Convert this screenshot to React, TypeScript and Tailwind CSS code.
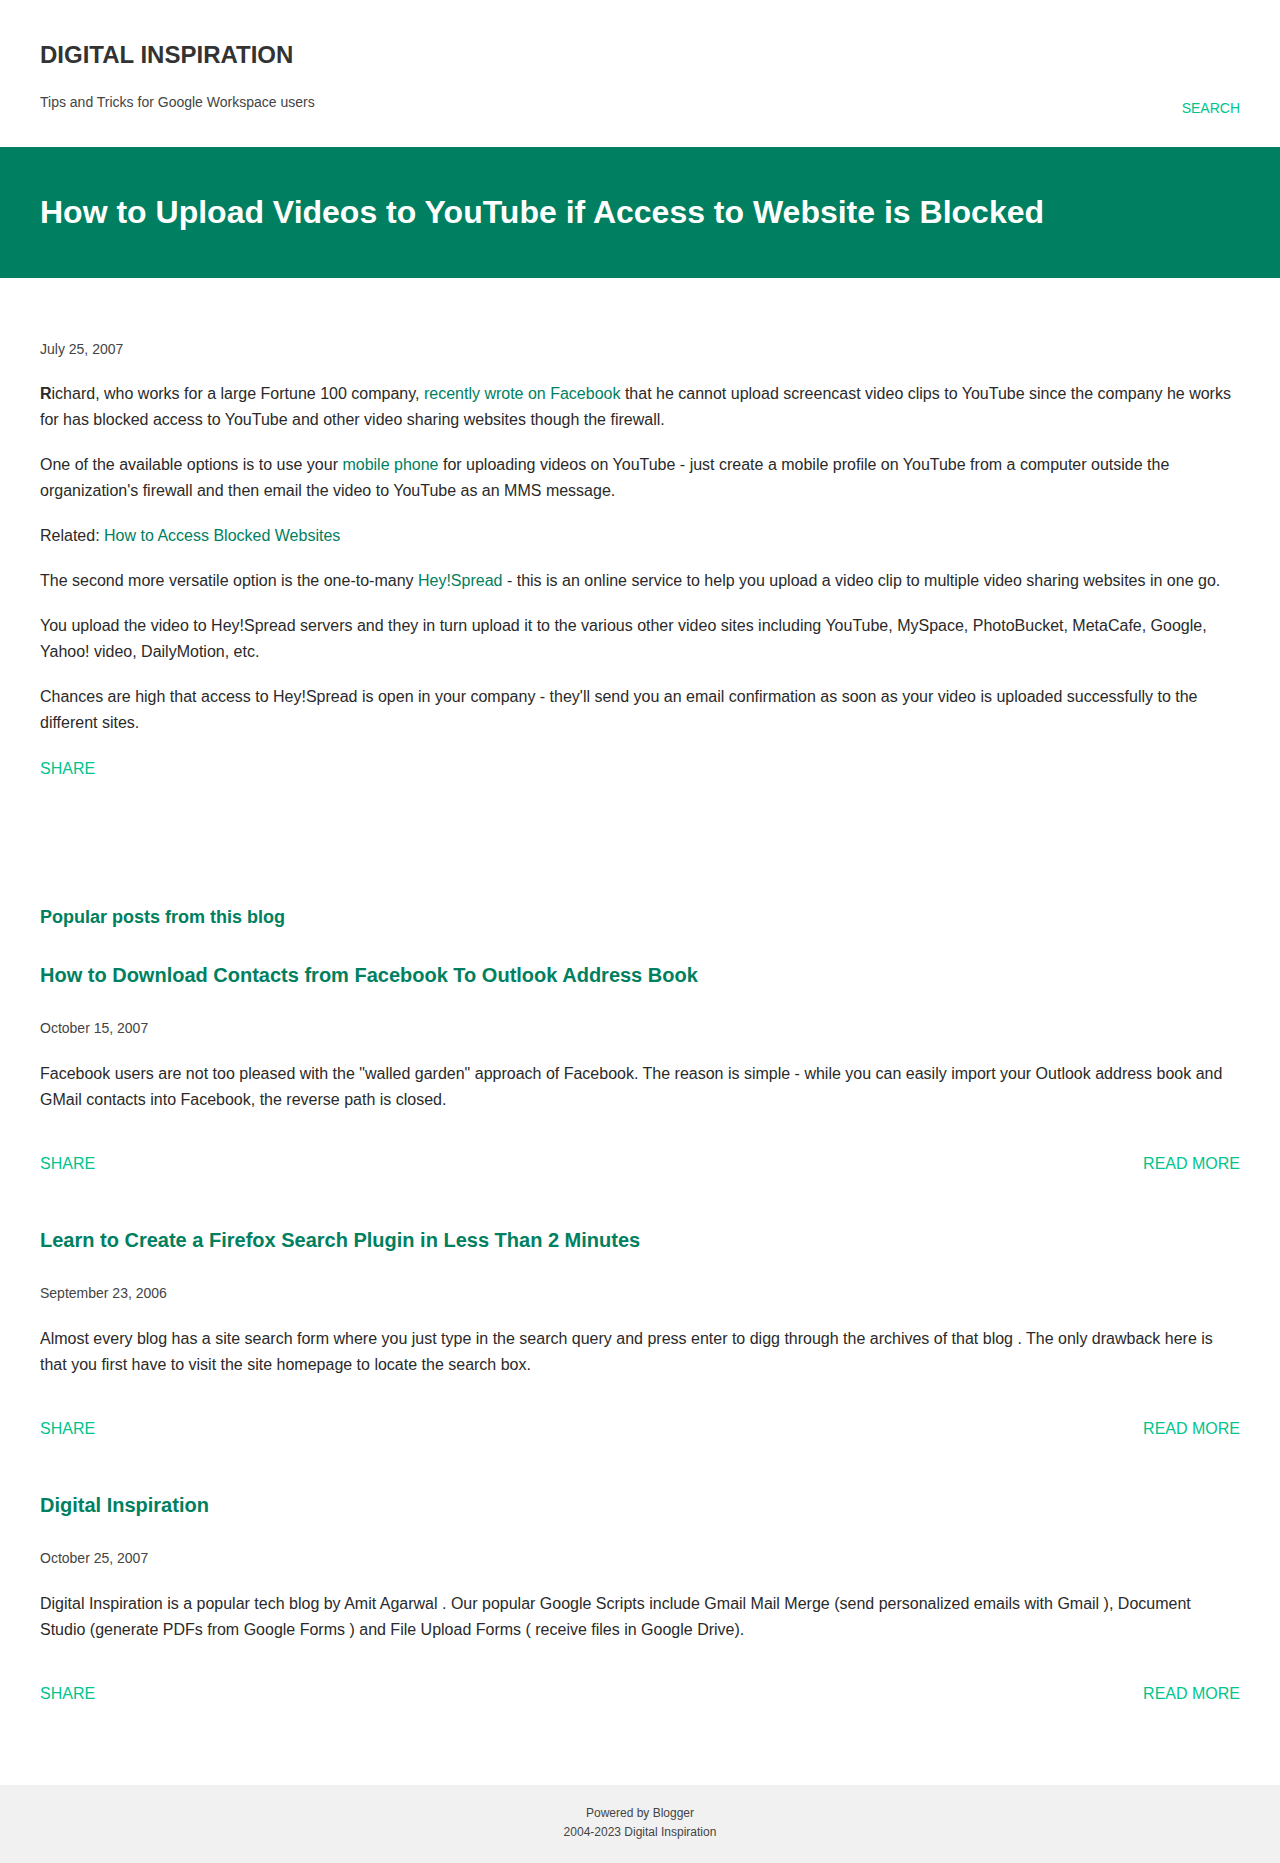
const posts = [
  {
    title: 'How to Download Contacts from Facebook To Outlook Address Book',
    date: 'October 15, 2007',
    snippet:
      'Facebook users are not too pleased with the "walled garden" approach of Facebook. The reason is simple - while you can easily import your Outlook address book and GMail contacts into Facebook, the reverse path is closed.',
  },
  {
    title: 'Learn to Create a Firefox Search Plugin in Less Than 2 Minutes',
    date: 'September 23, 2006',
    snippet:
      'Almost every blog has a site search form where you just type in the search query and press enter to digg through the archives of that blog . The only drawback here is that you first have to visit the site homepage to locate the search box.',
  },
  {
    title: 'Digital Inspiration',
    date: 'October 25, 2007',
    snippet:
      'Digital Inspiration is a popular tech blog by Amit Agarwal . Our popular Google Scripts include Gmail Mail Merge (send personalized emails with Gmail ), Document Studio (generate PDFs from Google Forms ) and File Upload Forms ( receive files in Google Drive).',
  },
]

const linkCls = 'text-[#00805f]'
const actionCls = 'text-[16px] leading-[26px] text-[#00c48c] uppercase'

export default function App() {
  return (
    <div className="min-h-screen bg-white font-['Liberation_Sans',Arial,sans-serif]">
      <header className="px-[40px] pt-[40px]">
        <h1 className="text-[24px] leading-[29px] font-bold text-[#333333]">DIGITAL INSPIRATION</h1>
        <div className="flex justify-between items-start mt-[23px]">
          <p className="text-[14px] leading-[20px] text-[#444444]">Tips and Tricks for Google Workspace users</p>
          <a className="mt-[6px] text-[14px] leading-[20px] text-[#00c48c]">SEARCH</a>
        </div>
      </header>

      <div className="mt-[29px] bg-[#008060] px-[40px] pt-[46px] pb-[47px]">
        <h2 className="text-[32px] leading-[38px] font-bold text-white">
          How to Upload Videos to YouTube if Access to Website is Blocked
        </h2>
      </div>

      <main className="px-[40px] pt-[61px]">
        <div className="text-[14px] leading-[20px] text-[#444444]">July 25, 2007</div>

        <div className="mt-[22px] text-[16px] leading-[26px] text-[#2a2a2a] flex flex-col gap-[19px]">
          <p>
            <b>R</b>ichard, who works for a large Fortune 100 company,{' '}
            <a className={linkCls}>recently wrote on Facebook</a> that he cannot upload screencast video clips to
            YouTube since the company he works for has blocked access to YouTube and other video sharing websites
            though the firewall.
          </p>
          <p>
            One of the available options is to use your <a className={linkCls}>mobile phone</a> for uploading videos
            on YouTube - just create a mobile profile on YouTube from a computer outside the organization's firewall
            and then email the video to YouTube as an MMS message.
          </p>
          <p>
            Related: <a className={linkCls}>How to Access Blocked Websites</a>
          </p>
          <p>
            The second more versatile option is the one-to-many <a className={linkCls}>Hey!Spread</a> - this is an
            online service to help you upload a video clip to multiple video sharing websites in one go.
          </p>
          <p>
            You upload the video to Hey!Spread servers and they in turn upload it to the various other video sites
            including YouTube, MySpace, PhotoBucket, MetaCafe, Google, Yahoo! video, DailyMotion, etc.
          </p>
          <p>
            Chances are high that access to Hey!Spread is open in your company - they'll send you an email
            confirmation as soon as your video is uploaded successfully to the different sites.
          </p>
        </div>

        <div className={'mt-[20px] ' + actionCls}>Share</div>

        <h3 className="mt-[124px] text-[18px] leading-[22px] font-bold text-[#00805f]">Popular posts from this blog</h3>

        {posts.map((post, i) => (
          <article key={post.title} className={i === 0 ? 'mt-[35px]' : 'mt-[51px]'}>
            <h4 className="text-[20px] leading-[24px] font-bold text-[#00805f]">{post.title}</h4>
            <div className="mt-[31px] text-[14px] leading-[20px] text-[#444444]">{post.date}</div>
            <p className="mt-[23px] text-[16px] leading-[26px] text-[#2a2a2a]">{post.snippet}</p>
            <div className="mt-[38px] flex justify-between">
              <span className={actionCls}>Share</span>
              <span className={actionCls}>Read more</span>
            </div>
          </article>
        ))}
      </main>

      <footer className="mt-[78px] bg-[#f1f1f1] pt-[19px] pb-[21px] text-center text-[12px] leading-[19px] text-[#444444]">
        <div>Powered by Blogger</div>
        <div>2004-2023 Digital Inspiration</div>
      </footer>
    </div>
  )
}
